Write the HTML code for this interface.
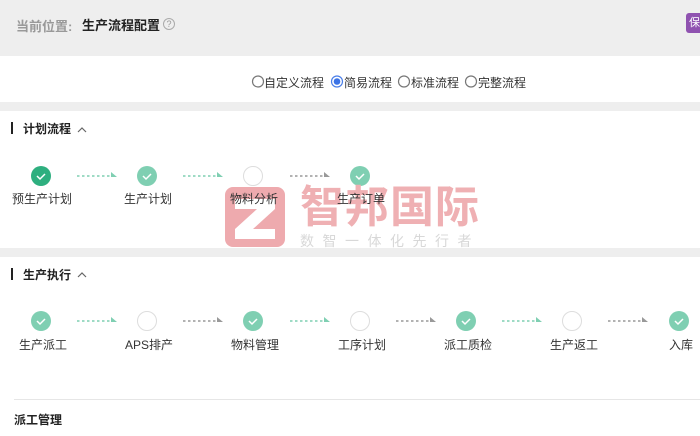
<!DOCTYPE html>
<html><head><meta charset="utf-8"><style>
*{margin:0;padding:0;box-sizing:border-box}
body{width:700px;height:436px;overflow:hidden;background:#fff;font-family:"Liberation Sans","Noto Sans CJK SC",sans-serif;font-size:12px;color:#333;position:relative}
.a{position:absolute;white-space:nowrap}
.c{position:absolute;width:20px;height:20px;border-radius:50%}
.g{background:#7fcfb2}
.d{background:#2eaf7f}
.e{border:1.5px solid #ddd;background:#fff}
.lbl{position:absolute;width:100px;text-align:center;font-size:12px;color:#333}
.h{position:absolute;font-weight:bold;font-size:12px;color:#222}
.bar{position:absolute;width:2px;height:12px;background:#222}
</style></head><body>
<div class="a" style="left:0;top:0;width:700px;height:56px;background:#eeeeee"></div>
<div class="a" style="left:16px;top:16px;font-size:13px;color:#999;font-weight:bold">当前位置:</div>
<div class="a" style="left:82px;top:15px;font-size:13px;color:#222;font-weight:bold">生产流程配置</div>
<div class="a" style="left:163px;top:18px;width:12px;height:12px;border:1px solid #aaa;border-radius:50%;font-size:9px;color:#999;text-align:center;line-height:10px">?</div>
<div class="a" style="left:686px;top:13px;width:20px;height:20px;background:#8f52b0;border-radius:3px;color:#fff;font-size:11px;line-height:20px;padding-left:3px">保</div>
<div class="a" style="left:0;top:102px;width:700px;height:9px;background:#eeeeee"></div>
<div class="a" style="left:0;top:248px;width:700px;height:9px;background:#eeeeee"></div>
<svg class="a" style="left:0;top:0" width="700" height="436">
<g fill="none" stroke="#777" stroke-width="1.2"><circle cx="258" cy="81.5" r="5.5"/><circle cx="404" cy="81.5" r="5.5"/><circle cx="471" cy="81.5" r="5.5"/></g>
<circle cx="337" cy="81.5" r="5.5" fill="#fff" stroke="#4a7ee8" stroke-width="1.2"/><circle cx="337" cy="81.5" r="3.3" fill="#3b73e6"/>
<path d="M78 132l4-4 4 4M78 277l4-4 4 4" fill="none" stroke="#666" stroke-width="1.2"/>
<g stroke-width="1.6" stroke-dasharray="2.5 2.5">
<line x1="77" y1="176" x2="111" y2="176" stroke="#7fcfb2"/>
<line x1="183" y1="176" x2="217" y2="176" stroke="#7fcfb2"/>
<line x1="290" y1="176" x2="324" y2="176" stroke="#999"/>
<line x1="77" y1="321" x2="111" y2="321" stroke="#7fcfb2"/>
<line x1="183" y1="321" x2="217" y2="321" stroke="#999"/>
<line x1="290" y1="321" x2="324" y2="321" stroke="#7fcfb2"/>
<line x1="396" y1="321" x2="430" y2="321" stroke="#999"/>
<line x1="502" y1="321" x2="536" y2="321" stroke="#7fcfb2"/>
<line x1="608" y1="321" x2="642" y2="321" stroke="#999"/>
</g>
<g>
<path d="M111 172l6 5h-6z" fill="#7fcfb2"/><path d="M217 172l6 5h-6z" fill="#7fcfb2"/><path d="M324 172l6 5h-6z" fill="#999"/>
<path d="M111 317l6 5h-6z" fill="#7fcfb2"/><path d="M217 317l6 5h-6z" fill="#999"/><path d="M324 317l6 5h-6z" fill="#7fcfb2"/>
<path d="M430 317l6 5h-6z" fill="#999"/><path d="M536 317l6 5h-6z" fill="#7fcfb2"/><path d="M642 317l6 5h-6z" fill="#999"/>
</g>
<line x1="14" y1="399.5" x2="700" y2="399.5" stroke="#e6e6e6"/>
</svg>
<div class="a" style="left:264px;top:74px;font-size:12px">自定义流程</div>
<div class="a" style="left:344px;top:74px;font-size:12px">简易流程</div>
<div class="a" style="left:411px;top:74px;font-size:12px">标准流程</div>
<div class="a" style="left:478px;top:74px;font-size:12px">完整流程</div>

<div class="bar" style="left:11px;top:122px"></div><div class="h" style="left:23px;top:120px">计划流程</div>
<div class="bar" style="left:11px;top:268px"></div><div class="h" style="left:23px;top:266px">生产执行</div>
<div class="h" style="left:14px;top:411px">派工管理</div>

<div class="a" style="left:225px;top:187px;width:60px;height:60px;background:#eeaaae;border-radius:8px"></div>
<svg class="a" style="left:225px;top:187px" width="60" height="60"><path d="M10 12H50V22L28 42H50V52H10V42L32 22H10Z" fill="#fff"/></svg>

<div class="c d" style="left:31px;top:166px"></div>
<div class="c g" style="left:137px;top:166px"></div>
<div class="c e" style="left:243px;top:166px"></div>
<div class="c g" style="left:350px;top:166px"></div>
<div class="c g" style="left:31px;top:311px"></div>
<div class="c e" style="left:137px;top:311px"></div>
<div class="c g" style="left:243px;top:311px"></div>
<div class="c e" style="left:350px;top:311px"></div>
<div class="c g" style="left:456px;top:311px"></div>
<div class="c e" style="left:562px;top:311px"></div>
<div class="c g" style="left:669px;top:311px"></div>
<svg class="a" style="left:0;top:0" width="700" height="436"><g fill="none" stroke="#fff" stroke-width="1.5">
<path d="M37 176l3 3 5-5M143 176l3 3 5-5M356 176l3 3 5-5M37 321l3 3 5-5M249 321l3 3 5-5M462 321l3 3 5-5M675 321l3 3 5-5"/></g></svg>

<div class="a" style="left:300px;top:183px;font-size:44px;font-weight:bold;color:#efb0b3;letter-spacing:1px;line-height:50px">智邦国际</div>
<div class="a" style="left:300px;top:231px;font-size:14px;color:#d8d8d8;letter-spacing:8.5px">数智一体化先行者</div>

<div class="lbl" style="left:-8px;top:190px">预生产计划</div>
<div class="lbl" style="left:98px;top:190px">生产计划</div>
<div class="lbl" style="left:204px;top:190px">物料分析</div>
<div class="lbl" style="left:311px;top:190px">生产订单</div>
<div class="lbl" style="left:-7px;top:336px">生产派工</div>
<div class="lbl" style="left:99px;top:336px">APS排产</div>
<div class="lbl" style="left:205px;top:336px">物料管理</div>
<div class="lbl" style="left:312px;top:336px">工序计划</div>
<div class="lbl" style="left:418px;top:336px">派工质检</div>
<div class="lbl" style="left:524px;top:336px">生产返工</div>
<div class="lbl" style="left:631px;top:336px">入库</div>
</body></html>
